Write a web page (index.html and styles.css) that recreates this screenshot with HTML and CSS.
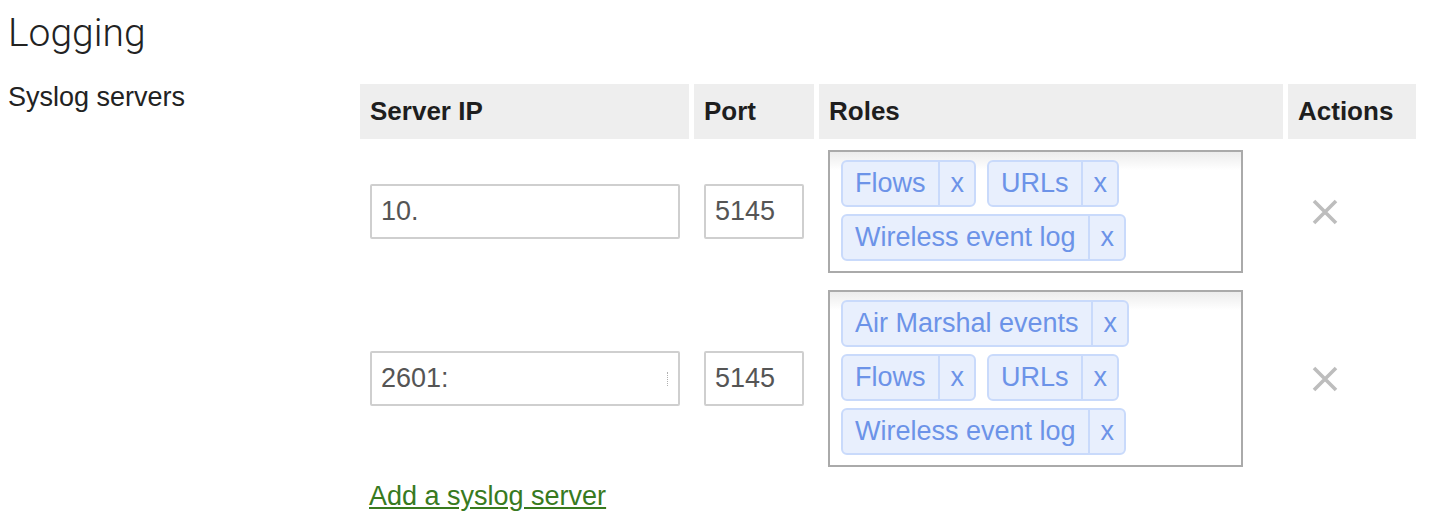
FILE: index.html
```html
<!DOCTYPE html>
<html>
<head>
<meta charset="utf-8">
<title>Logging</title>
<link rel="stylesheet" href="styles.css">
</head>
<body>
<div class="page">
  <h1 class="title">Logging</h1>
  <div class="setting">
    <div class="setting-label">Syslog servers</div>
    <div class="setting-body">
      <table class="servers">
        <thead>
          <tr>
            <th class="c-ip">Server IP</th>
            <th class="c-port">Port</th>
            <th class="c-roles">Roles</th>
            <th class="c-actions">Actions</th>
          </tr>
        </thead>
        <tbody>
          <tr>
            <td><div class="field field-ip">10.</div></td>
            <td><div class="field field-port">5145</div></td>
            <td class="roles-cell">
              <div class="roles">
                <span class="tag"><span class="tag-label">Flows</span><span class="tag-x">x</span></span>
                <span class="tag"><span class="tag-label">URLs</span><span class="tag-x">x</span></span>
                <span class="tag"><span class="tag-label">Wireless event log</span><span class="tag-x">x</span></span>
              </div>
            </td>
            <td class="actions-cell">
              <svg class="remove" width="26" height="26" viewBox="0 0 26 26"><path d="M2 2 L24 24 M24 2 L2 24" /></svg>
            </td>
          </tr>
          <tr>
            <td><div class="field field-ip"><span>2601:</span><span class="frag"></span></div></td>
            <td><div class="field field-port">5145</div></td>
            <td class="roles-cell">
              <div class="roles">
                <span class="tag"><span class="tag-label">Air Marshal events</span><span class="tag-x">x</span></span>
                <span class="tag"><span class="tag-label">Flows</span><span class="tag-x">x</span></span>
                <span class="tag"><span class="tag-label">URLs</span><span class="tag-x">x</span></span>
                <span class="tag"><span class="tag-label">Wireless event log</span><span class="tag-x">x</span></span>
              </div>
            </td>
            <td class="actions-cell">
              <svg class="remove" width="26" height="26" viewBox="0 0 26 26"><path d="M2 2 L24 24 M24 2 L2 24" /></svg>
            </td>
          </tr>
        </tbody>
      </table>
      <a class="add-link" href="#">Add a syslog server</a>
    </div>
  </div>
</div>
</body>
</html>
```

FILE: styles.css
```css
html, body {
  margin: 0;
  padding: 0;
  background: #ffffff;
}

body {
  font-family: "Liberation Sans", Arial, sans-serif;
  font-size: 27px;
  color: #222222;
}

.page {
  padding: 0 8px;
}

.title {
  margin: 10px 0 0;
  font-family: Roboto, "Liberation Sans", sans-serif;
  font-weight: 300;
  font-size: 39px;
  line-height: 46px;
  color: #222222;
}

.setting {
  display: flex;
  margin-top: 23px;
}

.setting-label {
  width: 347px;
  flex: none;
  padding-top: 3px;
  line-height: 31px;
}

.setting-body {
  display: flex;
  flex-direction: column;
  align-items: flex-start;
}

.servers {
  border-collapse: separate;
  border-spacing: 5px;
  table-layout: fixed;
  width: 1066px;
}

.servers th {
  box-sizing: border-box;
  height: 55px;
  padding: 0 10px;
  background: #eeeeee;
  text-align: left;
  font-weight: bold;
  font-size: 26px;
  color: #1e1e1e;
}

.c-ip { width: 329px; }
.c-port { width: 120px; }
.c-roles { width: 464px; }
.c-actions { width: 128px; }

.servers td {
  padding: 6px 10px;
  vertical-align: middle;
}

.field {
  box-sizing: border-box;
  height: 55px;
  border: 2px solid #cfcfcf;
  border-radius: 2px;
  padding: 0 9px;
  display: flex;
  align-items: center;
  justify-content: space-between;
  color: #555555;
  font-size: 27px;
  background: #fff;
}

.field-ip { width: 310px; }
.field-port { width: 100px; }

.frag {
  display: block;
  width: 0;
  height: 14px;
  margin-right: 1px;
  border-left: 1px dotted #b0b0b0;
}

.servers td.roles-cell {
  padding-left: 9px;
}

.roles {
  box-sizing: border-box;
  width: 415px;
  border: 2px solid #aaaaaa;
  background: linear-gradient(#ececec, #ffffff 18px);
  padding: 8px 11px 10px;
  display: flex;
  flex-wrap: wrap;
  gap: 7px 11px;
}

.tag {
  box-sizing: border-box;
  height: 47px;
  display: inline-flex;
  align-items: stretch;
  border: 2px solid #c9dafb;
  border-radius: 6px;
  background: #e8effd;
  color: #6c93e8;
  font-size: 27px;
}

.tag-label {
  display: flex;
  align-items: center;
  padding: 0 12px 0 12px;
}

.tag-x {
  display: flex;
  align-items: center;
  padding: 0 10px 0 11px;
  border-left: 2px solid #c9dafb;
}

.servers td.actions-cell {
  padding-left: 24px;
}

.remove {
  display: block;
  filter: blur(0.7px);
}

.remove path {
  stroke: #bdbdbd;
  stroke-width: 3.6;
  fill: none;
}

.add-link {
  margin: 3px 0 0 14px;
  line-height: 31px;
  color: #387a1e;
  text-decoration: underline;
  font-size: 27px;
}
```
